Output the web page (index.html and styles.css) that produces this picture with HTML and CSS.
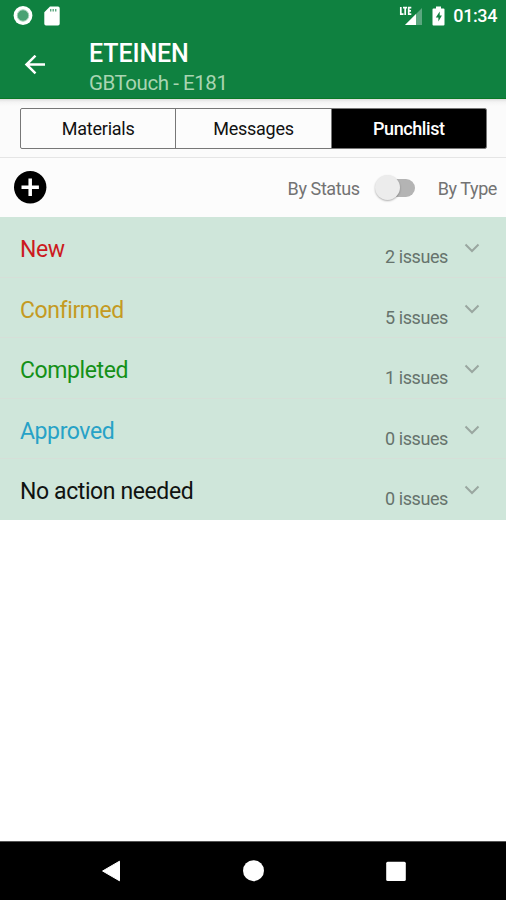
FILE: index.html
```html
<!DOCTYPE html>
<html lang="en">
<head>
<meta charset="utf-8">
<title>GBTouch</title>
<link rel="stylesheet" href="styles.css">
</head>
<body>
<div class="screen">
  <div class="status">
    <svg class="record" width="20" height="20" viewBox="0 0 20 20"><circle cx="10" cy="9.500" r="9.400" fill="#fff"/><circle cx="10" cy="9.500" r="5.700" fill="#4aa273" stroke="#a4d2b8" stroke-width="1"/></svg>
    <svg class="sd" width="16" height="20" viewBox="0 0 16 20"><path d="M6 .5h8a1.700 1.700 0 0 1 1.700 1.700v15.600a1.700 1.700 0 0 1-1.700 1.700H2A1.700 1.700 0 0 1 .3 17.800V6.200z" fill="#fff"/><path d="M6 3h1.400v2.500H6zm2.500 0h1.400v2.500H8.500zM11 3h1.400v2.500H11z" fill="#5ba77f"/></svg>
    <svg class="signal" width="24" height="20" viewBox="0 0 24 20"><path d="M6 19 23 2v17z" fill="#5ba77f"/><path d="M6 19 17 8v11z" fill="#fff"/><path d="M1.800 1v7.200h2.700M4 1.700h4M6.200 1.700V9M12.300 1.700H9.700v6.500h2.600M9.700 4.900h2.300" fill="none" stroke="#fff" stroke-width="1.700"/></svg>
    <svg class="battery" width="13" height="20" viewBox="0 0 13 20"><path d="M4 .5h5v2h2.500a1 1 0 0 1 1 1v15a1 1 0 0 1-1 1h-10a1 1 0 0 1-1-1v-15a1 1 0 0 1 1-1H4z" fill="#fff"/><path d="M7.700 5.500 3.800 11.500h2.600V15.500l3.500-6H7.700z" fill="#0f8140"/></svg>
    <span class="time">01:34</span>
  </div>
  <header class="appbar">
    <svg class="back" width="22" height="20" viewBox="0 0 22 20"><path d="M21 9.500H2.500M11.500 .7l-9 8.800 9 8.800" fill="none" stroke="#fff" stroke-width="2.500"/></svg>
    <div class="titles">
      <h1 class="title">ETEINEN</h1>
      <div class="subtitle">GBTouch - E181</div>
    </div>
  </header>
  <nav class="tabs">
    <div class="segments">
      <div class="segment">Materials</div>
      <div class="segment">Messages</div>
      <div class="segment active">Punchlist</div>
    </div>
  </nav>
  <div class="toolbar">
    <svg class="add" width="33" height="33" viewBox="0 0 33 33"><circle cx="16.200" cy="16.200" r="16.200" fill="#000"/><path d="M16.200 7.500v17.400M7.500 16.200h17.400" stroke="#fff" stroke-width="3.500"/></svg>
    <span class="by-status">By Status</span>
    <span class="switch"><span class="thumb"></span></span>
    <span class="by-type">By Type</span>
  </div>
  <main class="list">
    <div class="row"><span class="name new">New</span><span class="count">2 issues</span><svg class="chevron" width="16" height="10" viewBox="0 0 16 10"><path d="m1.500 1.500 6.500 6.500 6.500-6.500"/></svg></div>
    <div class="row"><span class="name confirmed">Confirmed</span><span class="count">5 issues</span><svg class="chevron" width="16" height="10" viewBox="0 0 16 10"><path d="m1.500 1.500 6.500 6.500 6.500-6.500"/></svg></div>
    <div class="row"><span class="name completed">Completed</span><span class="count">1 issues</span><svg class="chevron" width="16" height="10" viewBox="0 0 16 10"><path d="m1.500 1.500 6.500 6.500 6.500-6.500"/></svg></div>
    <div class="row"><span class="name approved">Approved</span><span class="count">0 issues</span><svg class="chevron" width="16" height="10" viewBox="0 0 16 10"><path d="m1.500 1.500 6.500 6.500 6.500-6.500"/></svg></div>
    <div class="row"><span class="name none">No action needed</span><span class="count">0 issues</span><svg class="chevron" width="16" height="10" viewBox="0 0 16 10"><path d="m1.500 1.500 6.500 6.500 6.500-6.500"/></svg></div>
  </main>
  <footer class="navbar">
    <svg width="22" height="22" viewBox="0 0 22 22"><path d="M19.500 1.200v19.600L2.600 11z" fill="#fff" stroke="#fff" stroke-linejoin="round"/></svg>
    <svg width="22" height="22" viewBox="0 0 22 22"><circle cx="10.500" cy="10.700" r="10.500" fill="#fff"/></svg>
    <svg width="22" height="22" viewBox="0 0 22 22"><rect x="1.200" y="1.700" width="19.600" height="19.300" rx="1.500" fill="#fff"/></svg>
  </footer>
</div>
</body>
</html>
```

FILE: styles.css
```css
* { box-sizing: border-box; }

body {
  margin: 0;
  font-family: Roboto, sans-serif;
  background: #fff;
}

.screen {
  display: flex;
  flex-direction: column;
  width: 506px;
  height: 900px;
  overflow: hidden;
}

.status {
  display: flex;
  align-items: center;
  height: 31px;
  padding: 0 9px 0 13px;
  background: #0f8140;
  color: #fff;
}

.sd { margin-left: 11px; }
.signal { margin-left: auto; }
.battery { margin-left: 9px; }

.time {
  margin-left: 8px;
  font-size: 18px;
  font-weight: 500;
  line-height: 20px;
  letter-spacing: -0.4px;
}

.appbar {
  display: flex;
  height: 68px;
  padding-left: 24px;
  background: #0f8140;
  border-bottom: 1px solid #087925;
  color: #fff;
}

.back { margin-top: 24px; }
.titles { margin-left: 43px; }

.title {
  margin: 6px 0 0;
  font-size: 25px;
  font-weight: 500;
  line-height: 33px;
  letter-spacing: -0.1px;
}

.subtitle {
  font-size: 20.5px;
  line-height: 26px;
  letter-spacing: -0.45px;
  color: #a9d5b2;
}

.tabs {
  height: 59px;
  padding: 9px 19px 0 20px;
  background: linear-gradient(#dedede, #f4f4f4 3px, #fbfbfb 7px);
  border-bottom: 1px solid #e5e5e5;
}

.segments {
  display: flex;
  height: 41px;
  border: 1px solid #777;
  border-radius: 2px;
  background: #fcfcfc;
  overflow: hidden;
}

.segment {
  flex: 1;
  line-height: 40px;
  text-align: center;
  font-size: 18px;
  letter-spacing: -0.25px;
  color: #111;
}

.segment + .segment { border-left: 1px solid #777; }

.segment.active {
  background: #000;
  color: #fff;
  font-weight: 500;
  letter-spacing: -0.4px;
}

.toolbar {
  display: flex;
  align-items: center;
  height: 59px;
  padding: 0 9px 0 14px;
  background: #fcfcfc;
  color: #737373;
  font-size: 18px;
  letter-spacing: -0.4px;
}

.by-status,
.by-type { padding-top: 1px; }

.by-status { margin-left: auto; }

.switch {
  position: relative;
  width: 36px;
  height: 18px;
  margin: 0 23px 0 19px;
  border-radius: 9px;
  background: #b4b4b4;
}

.thumb {
  position: absolute;
  left: -4px;
  top: -4px;
  width: 25px;
  height: 25px;
  border-radius: 50%;
  background: #ececec;
  box-shadow: 0 1px 2px rgba(0, 0, 0, 0.3);
}

.list {
  display: grid;
  grid-template-rows: repeat(5, 60.5px);
  height: 303px;
  background: #cfe6da;
}

.row {
  display: flex;
  align-items: flex-start;
  padding: 0 26px 0 20px;
  border-bottom: 1px solid #d6dfd8;
}

.row:last-child { border-bottom: 0; }

.name {
  margin-top: 18px;
  font-size: 23px;
  line-height: 30px;
  letter-spacing: -0.4px;
}

.new { color: #cc1920; }
.confirmed { color: #c49a22; }
.completed { color: #149017; }
.approved { color: #27a2c7; }
.none { color: #101311; }

.count {
  margin: 28px 16px 0 auto;
  font-size: 18px;
  line-height: 24px;
  letter-spacing: -0.4px;
  color: #66736c;
}

.chevron {
  margin-top: 26px;
  fill: none;
  stroke: #9aa7a0;
  stroke-width: 2;
}

.navbar {
  display: flex;
  justify-content: space-between;
  align-items: center;
  height: 59px;
  margin-top: auto;
  padding: 0 99px 0 100px;
  background: #000;
  border-top: 1px solid #555;
}
```
